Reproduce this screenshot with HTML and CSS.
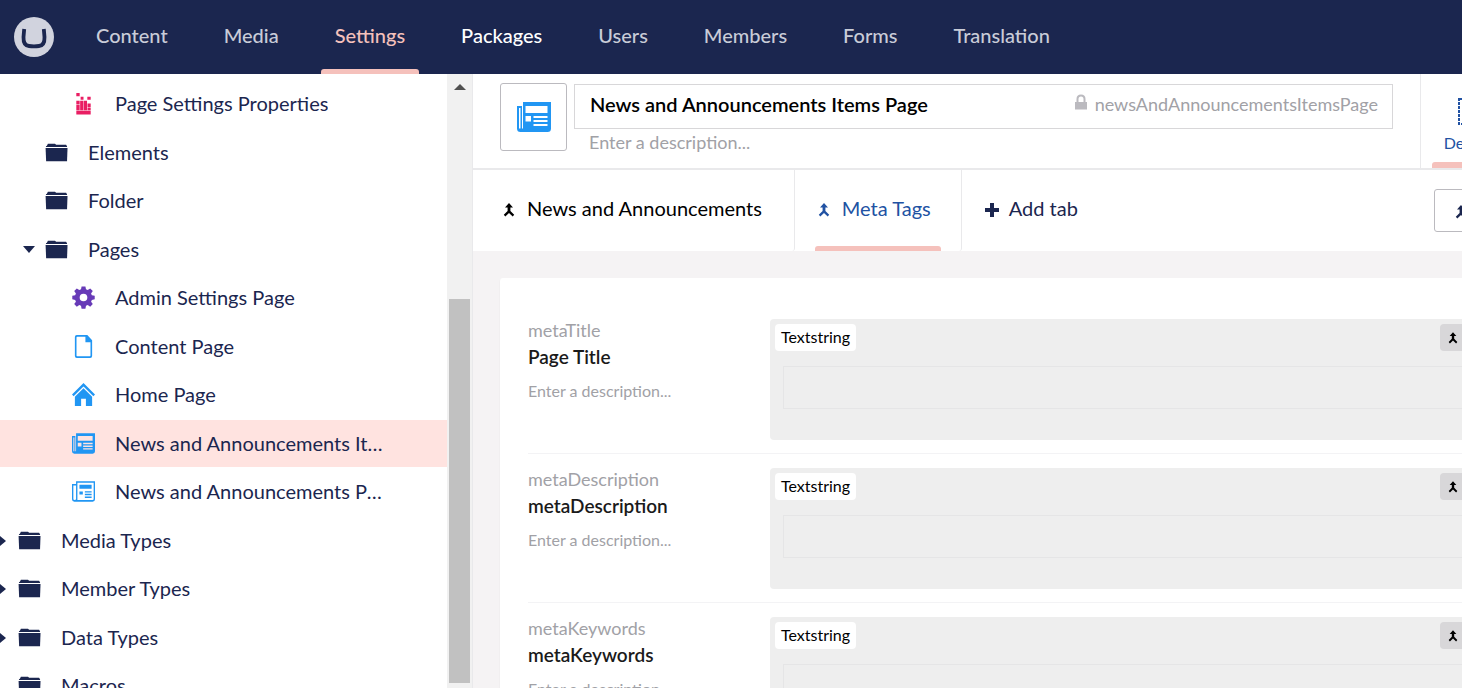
FILE: index.html
```html
<!DOCTYPE html>
<html lang="en">
<head>
  <meta charset="UTF-8" />
  <meta name="viewport" content="width=device-width, initial-scale=1" />
  <title>News and Announcements Items Page</title>
  <link rel="stylesheet" href="styles.css">
</head>
<body>

  <svg class="sprite" aria-hidden="true">
    <symbol id="i-folder" viewBox="0 0 24 20">
      <path d="M1 3.6 2 3 3 .8h7.4L11.6 2H22l1 1.6v.6H1z" />
      <path d="M.6 5.4h22.9L23 19.2H1.2z" />
    </symbol>
    <symbol id="i-news" viewBox="0 0 34 30">
      <path fill-rule="evenodd" d="M6 0h28v26.500q0 3.500-3.500 3.500H3.500Q0 30 0 26.500V4h5v22.500h1zM8.500 4v7h22V4zM8.500 14v5.500h5.500V14zM16.500 14v2h14v-2zM16.500 18v2h14v-2zM16.500 22v2h14v-2zM2 6v20.500h1.500V6z" />
    </symbol>
    <symbol id="i-news-light" viewBox="0 0 34 30">
      <path fill-rule="evenodd" d="M6 0h28v26.500q0 3.500-3.500 3.500H3.500Q0 30 0 26.500V4h6zM8 2v25.500h22.500q1.500 0 1.500-1.500V2zM2 6v20q0 1.500 2 1.500 2 0 2-1.500V6z" />
      <path d="M11 5h18v6H11zM11 15h5v4.500h-5zM19 14.500h10v2H19zM19 18.500h10v2H19zM19 22.500h10v2H19z" />
    </symbol>
    <symbol id="i-merge" viewBox="0 0 12 14">
      <path d="M6 0 10 4.500H7.400V8l3.800 3.800L9.700 13.600 6 9.900l-3.700 3.700L.8 11.800 4.600 8V4.500H2z" />
    </symbol>
    <symbol id="i-gear" viewBox="0 0 24 24">
      <path fill-rule="evenodd" d="M10 .5h4l.6 3 1.800.8 2.600-1.800 2.700 2.700-1.800 2.600.8 1.800 3 .6v3.700l-3 .6-.8 1.900 1.800 2.500-2.700 2.700-2.600-1.700-1.800.7-.6 3.100h-4l-.6-3.100-1.800-.7L5 21.600l-2.700-2.700 1.800-2.500-.8-1.900-3-.6v-3.700l3-.6.800-1.800-1.800-2.600L5 2.500l2.600 1.800 1.800-.8zM12 8a4 4 0 1 0 0 8 4 4 0 0 0 0-8z" />
    </symbol>
    <symbol id="i-doc" viewBox="0 0 18 24">
      <path fill-rule="evenodd" d="M2 0h11l5 5.500V22q0 2-2 2H2q-2 0-2-2V2q0-2 2-2zM2.500 1.800q-.8 0-.8.800V21.400q0 .8.800.8h13q.8 0 .8-.8V7.500H11V1.800z" />
    </symbol>
    <symbol id="i-home" viewBox="0 0 24 24">
      <path d="M12 0 24 12l-1.700 1.800L12 3.700 1.700 13.800 0 12z" />
      <path d="M12 5.500 21 14.300V24h-6.500v-7.500h-5V24H3v-9.700z" />
    </symbol>
    <symbol id="i-blocks" viewBox="0 0 16 24">
      <path d="M.5 1h3.500v3.500H.5zM5 5h3v3H5zM12 5h3.500v3H12zM.5 9h3.500v4H.5zM4.500 9h3.500v10H4.500zM8.500 9h3.200v10H8.500zM12.200 12h3.300v3.600h-3.300zM.5 13.500h3.500v5.500H.5zM12.200 16.200h3.300V19h-3.300zM.5 19.500h15v4H.5z" />
    </symbol>
    <symbol id="i-lock" viewBox="0 0 12 16">
      <path fill-rule="evenodd" d="M1.500 8V5q0-4.500 4.500-4.500T10.500 5v3H12v7.500H0V8zM3.500 8h5V5Q8.500 2.500 6 2.500T3.500 5z" />
    </symbol>
  </svg>

  <header class="app-header">
    <a class="logo" href="#" aria-label="Home">
      <svg viewBox="0 0 40 40">
        <circle cx="20" cy="20" r="20" fill="#d1d3de" />
        <path d="M10.200 12 9.500 20q-.3 8.500 5.500 9 5 .6 10 0 5.800-.5 5.500-9L29.800 12" fill="none" stroke="#1b264f" stroke-width="3.800" />
      </svg>
    </a>
    <nav class="sections">
      <a href="#">Content</a>
      <a href="#">Media</a>
      <a href="#" class="current">Settings</a>
      <a href="#" class="hover">Packages</a>
      <a href="#">Users</a>
      <a href="#">Members</a>
      <a href="#">Forms</a>
      <a href="#">Translation</a>
    </nav>
  </header>

  <div class="workspace">
    <aside class="sidebar">
      <ul class="tree">
        <li class="level-3"><a href="#"><svg class="icon pink"><use href="#i-blocks" /></svg><span>Page Settings Properties</span></a></li>
        <li class="level-2"><a href="#"><svg class="icon"><use href="#i-folder" /></svg><span>Elements</span></a></li>
        <li class="level-2"><a href="#"><svg class="icon"><use href="#i-folder" /></svg><span>Folder</span></a></li>
        <li class="level-2"><a href="#"><i class="caret open"></i><svg class="icon"><use href="#i-folder" /></svg><span>Pages</span></a></li>
        <li class="level-3"><a href="#"><svg class="icon purple"><use href="#i-gear" /></svg><span>Admin Settings Page</span></a></li>
        <li class="level-3"><a href="#"><svg class="icon blue"><use href="#i-doc" /></svg><span>Content Page</span></a></li>
        <li class="level-3"><a href="#"><svg class="icon blue"><use href="#i-home" /></svg><span>Home Page</span></a></li>
        <li class="level-3 active"><a href="#"><svg class="icon blue"><use href="#i-news" /></svg><span>News and Announcements Items Page</span></a></li>
        <li class="level-3"><a href="#"><svg class="icon blue"><use href="#i-news-light" /></svg><span>News and Announcements Page</span></a></li>
        <li class="level-1"><a href="#"><i class="caret"></i><svg class="icon"><use href="#i-folder" /></svg><span>Media Types</span></a></li>
        <li class="level-1"><a href="#"><i class="caret"></i><svg class="icon"><use href="#i-folder" /></svg><span>Member Types</span></a></li>
        <li class="level-1"><a href="#"><i class="caret"></i><svg class="icon"><use href="#i-folder" /></svg><span>Data Types</span></a></li>
        <li class="level-1"><a href="#"><svg class="icon"><use href="#i-folder" /></svg><span>Macros</span></a></li>
      </ul>
      <div class="scrollbar" aria-hidden="true">
        <i class="scroll-up"></i>
        <div class="scroll-thumb"></div>
      </div>
    </aside>

    <main class="editor">
      <div class="editor-header">
        <button class="type-icon" aria-label="Change icon"><svg><use href="#i-news" /></svg></button>
        <div class="name-area">
          <div class="name-field">
            <input type="text" aria-label="Name" value="News and Announcements Items Page" />
            <button class="alias"><svg><use href="#i-lock" /></svg>newsAndAnnouncementsItemsPage</button>
          </div>
          <input class="description" type="text" aria-label="Description" placeholder="Enter a description..." />
        </div>
        <nav class="apps">
          <a href="#">
            <svg viewBox="0 0 20 27"><rect x="1" y="1" width="18" height="25" fill="none" stroke="#2152a3" stroke-width="2" stroke-dasharray="3 1" /></svg>
            Design
          </a>
        </nav>
      </div>

      <div class="tabs">
        <button class="tab first"><svg class="merge"><use href="#i-merge" /></svg>News and Announcements</button>
        <button class="tab current"><svg class="merge"><use href="#i-merge" /></svg>Meta Tags</button>
        <button class="tab add"><svg class="plus" viewBox="0 0 14 14"><path d="M5 0h4v5h5v4H9v5H5V9H0V5h5z" /></svg>Add tab</button>
        <button class="reorder" aria-label="Reorder"><svg class="merge"><use href="#i-merge" /></svg></button>
      </div>

      <div class="canvas">
        <section class="group">
          <div class="property">
            <div class="property-info">
              <span class="property-alias">metaTitle</span>
              <label class="property-name" for="metaTitle">Page Title</label>
              <span class="property-text">Enter a description...</span>
            </div>
            <div class="preview">
              <div class="preview-bar">
                <span class="badge">Textstring</span>
                <button class="inherit" aria-label="Inherited"><svg><use href="#i-merge" /></svg></button>
              </div>
              <input type="text" id="metaTitle" readonly />
            </div>
          </div>
          <div class="property">
            <div class="property-info">
              <span class="property-alias">metaDescription</span>
              <label class="property-name" for="metaDescription">metaDescription</label>
              <span class="property-text">Enter a description...</span>
            </div>
            <div class="preview">
              <div class="preview-bar">
                <span class="badge">Textstring</span>
                <button class="inherit" aria-label="Inherited"><svg><use href="#i-merge" /></svg></button>
              </div>
              <input type="text" id="metaDescription" readonly />
            </div>
          </div>
          <div class="property">
            <div class="property-info">
              <span class="property-alias">metaKeywords</span>
              <label class="property-name" for="metaKeywords">metaKeywords</label>
              <span class="property-text">Enter a description...</span>
            </div>
            <div class="preview">
              <div class="preview-bar">
                <span class="badge">Textstring</span>
                <button class="inherit" aria-label="Inherited"><svg><use href="#i-merge" /></svg></button>
              </div>
              <input type="text" id="metaKeywords" readonly />
            </div>
          </div>
        </section>
      </div>
    </main>
  </div>

</body>
</html>
```
FILE: styles.css
```css
* {
  box-sizing: border-box;
  margin: 0;
  padding: 0;
}

body {
  font-family: Lato, sans-serif;
  font-size: 20px;
  color: #1b264f;
  background: #fff;
  height: 100vh;
  display: flex;
  flex-direction: column;
  overflow: hidden;
}

a {
  color: inherit;
  text-decoration: none;
}

button,
input {
  font: inherit;
  color: inherit;
  background: none;
  border: none;
}

button {
  cursor: pointer;
}

svg {
  fill: currentColor;
  flex-shrink: 0;
}

.sprite {
  display: none;
}

/* top bar */

.app-header {
  flex: 0 0 74px;
  display: flex;
  align-items: center;
  gap: 14px;
  padding-left: 14px;
  background: #1b264f;
}

.logo,
.logo svg {
  display: block;
  width: 40px;
  height: 40px;
}

.sections {
  display: flex;
}

.sections a {
  display: flex;
  flex-direction: column;
  height: 74px;
  padding: 0 14px;
  margin: 0 14px;
  font-weight: 500;
  line-height: 70px;
  color: #c9ccd8;
}

.sections .current {
  color: #f5c1bc;
}

.sections .current::after {
  content: "";
  height: 5px;
  margin: -1px -14px 0;
  border-radius: 3px 3px 0 0;
  background: #f5c1bc;
}

.sections .hover {
  color: #fff;
}

.workspace {
  flex: 1;
  display: flex;
  min-height: 0;
}

/* tree */

.sidebar {
  flex: 0 0 473px;
  display: flex;
  border-right: 1px solid #e9e9eb;
  overflow: hidden;
}

.tree {
  flex: 1;
  min-width: 0;
  padding-top: 5px;
  list-style: none;
}

.tree li {
  height: 47px;
  margin-top: 1px;
}

.tree li:nth-child(even) {
  margin-top: 2px;
}

.tree .active {
  background: #ffe3e0;
}

.tree a {
  display: flex;
  align-items: center;
  height: 47px;
  padding-right: 60px;
}

.tree span {
  padding-bottom: 2px;
  overflow: hidden;
  white-space: nowrap;
  text-overflow: ellipsis;
}

.level-1 a {
  padding-left: 18px;
}

.level-2 a {
  padding-left: 45px;
}

.level-3 a {
  padding-left: 72px;
}

.icon {
  width: 23px;
  height: 23px;
  margin-right: 20px;
}

.pink {
  color: #e91e63;
}

.purple {
  color: #673ab7;
}

.blue {
  color: #2196f3;
}

.caret {
  width: 6px;
  margin-left: -18px;
  margin-right: 12px;
  border: 5px solid transparent;
  border-left: 6px solid #1b264f;
  border-right: 0;
}

.caret.open {
  width: 12px;
  margin-left: -22px;
  margin-right: 10px;
  border: 6px solid transparent;
  border-top: 7px solid #1b264f;
  border-bottom: 0;
}

.scrollbar {
  flex: 0 0 25px;
  display: flex;
  flex-direction: column;
  padding: 10px 2px 5px;
  background: #f1f1f1;
}

.scroll-up {
  align-self: center;
  border: 6px solid transparent;
  border-bottom: 6px solid #505050;
  border-top: 0;
}

.scroll-thumb {
  flex: 1;
  margin-top: 209px;
  background: #c1c1c1;
}

/* the editor is wider than the space left, its right end runs off the window */

.editor {
  flex: 1;
  min-width: 0;
  margin-right: -90px;
  display: flex;
  flex-direction: column;
}

.editor-header {
  flex: 0 0 96px;
  display: flex;
  padding-left: 27px;
  border-bottom: 2px solid #e9e9eb;
}

.type-icon {
  width: 67px;
  height: 68px;
  margin: 9px 7px 0 0;
  border: 1px solid #bbbabf;
  border-radius: 3px;
  color: #2196f3;
}

.type-icon svg {
  display: block;
  width: 34px;
  height: 30px;
  margin: 0 auto;
}

.name-area {
  flex: 1;
  min-width: 0;
  margin-right: 27px;
  padding-top: 10px;
}

.name-field {
  display: flex;
  height: 45px;
  padding: 0 14px 6px 15px;
  border: 1px solid #d8d7d9;
}

.name-field input {
  flex: 1;
  min-width: 0;
  font-weight: 600;
  color: #000;
}

.alias {
  display: flex;
  align-items: center;
  gap: 8px;
  font-size: 18px;
  color: #a1a1a6;
}

.alias svg {
  width: 12px;
  height: 16px;
  margin-bottom: 4px;
  color: #bbbabf;
}

.description {
  display: block;
  width: 100%;
  height: 28px;
  padding: 0 0 2px 15px;
  font-size: 18px;
}

.description::placeholder {
  color: #a1a1a6;
}

.apps {
  flex: 0 0 132px;
  display: flex;
  padding-left: 11px;
  border-left: 1px solid #e9e9eb;
}

.apps a {
  display: flex;
  flex-direction: column;
  align-items: center;
  width: 72px;
  padding-top: 24px;
  font-size: 16px;
  line-height: 24px;
  color: #2152a3;
}

.apps svg {
  width: 20px;
  height: 27px;
  margin-bottom: 6px;
}

.apps a::after {
  content: "";
  width: 100%;
  height: 6px;
  margin-top: auto;
  border-radius: 3px 3px 0 0;
  background: #f5c1bc;
}

.tabs {
  flex: 0 0 81px;
  display: flex;
  align-items: center;
  padding-right: 28px;
}

.tab {
  display: flex;
  align-items: center;
  gap: 12px;
  height: 81px;
  padding: 0 30px 6px 23px;
  border-right: 1px solid #e9e9eb;
  border-radius: 0 0 3px 0;
}

.tab.first {
  padding-left: 30px;
  padding-right: 32px;
  color: #000;
}

.tab.current {
  position: relative;
  color: #2152a3;
}

.tab.current::after {
  content: "";
  position: absolute;
  left: 20px;
  right: 20px;
  bottom: 0;
  height: 5px;
  border-radius: 3px 3px 0 0;
  background: #f5c1bc;
}

.tab.add {
  gap: 10px;
  border-right: none;
}

.merge {
  width: 12px;
  height: 14px;
  margin-top: 5px;
}

.plus {
  width: 14px;
  height: 14px;
  margin-top: 5px;
}

.reorder {
  width: 90px;
  height: 43px;
  margin-left: auto;
  padding-left: 20px;
  border: 1px solid #bbbabf;
  border-radius: 3px;
  text-align: left;
}

.canvas {
  flex: 1;
  min-height: 0;
  padding: 27px 28px 0 27px;
  background: #f5f3f4;
}

.group {
  padding: 41px 28px;
  background: #fff;
  border-radius: 3px;
  box-shadow: 0 1px 1px rgba(0, 0, 0, 0.16);
}

.property {
  display: flex;
  padding-bottom: 13px;
  margin-bottom: 14px;
  border-bottom: 1px solid #f3f3f5;
}

.property-info {
  flex: 0 0 242px;
  display: flex;
  flex-direction: column;
}

.property-alias {
  font-size: 18px;
  line-height: 22px;
  color: #a1a1a6;
}

.property-name {
  font-size: 19px;
  font-weight: 600;
  line-height: 32px;
  color: #1a1a1a;
}

.property-text {
  margin-top: 6px;
  font-size: 16px;
  line-height: 24px;
  color: #a1a1a6;
}

.preview {
  flex: 1;
  height: 121px;
  padding: 5px;
  border-radius: 4px;
  background: #eee;
}

.preview-bar {
  display: flex;
  justify-content: space-between;
}

.badge {
  height: 27px;
  padding: 0 6px;
  border-radius: 4px;
  background: #fff;
  font-size: 16px;
  line-height: 25px;
  color: #000;
}

.inherit {
  width: 51px;
  height: 27px;
  padding-left: 8px;
  border-radius: 4px;
  background: #d8d7d9;
  color: #000;
  text-align: left;
}

.inherit svg {
  display: block;
  width: 10px;
  height: 12px;
}

.preview input {
  display: block;
  width: calc(100% - 16px);
  height: 43px;
  margin: 15px 8px 0;
  border: 1px solid #e5e5e6;
}
```
